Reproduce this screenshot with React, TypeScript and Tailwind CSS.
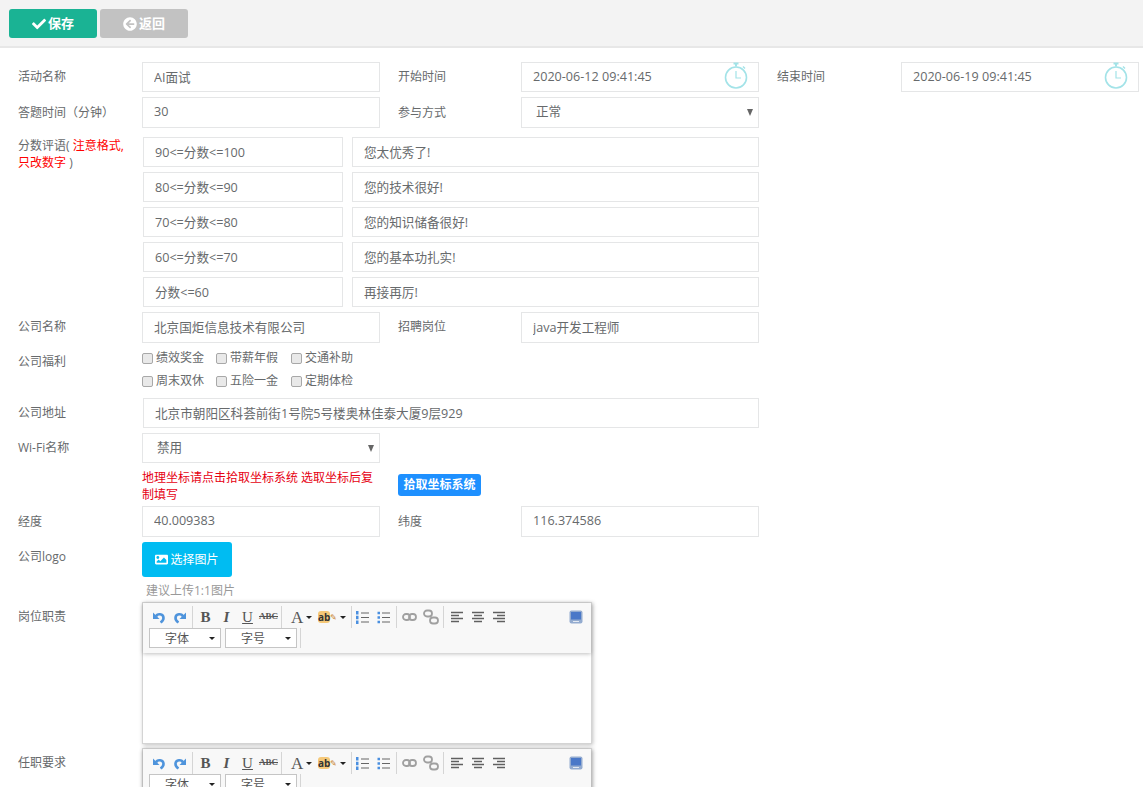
import { FaArrowCircleLeft, FaCheck, FaImage } from 'react-icons/fa'

const fieldClass =
  'h-full w-full border border-[#e5e6e7] bg-white px-[11px] pb-[2px] text-[12.6px] text-[#676a6c] outline-none'

function Label({ children, className = 'pt-[6px]' }: { children: React.ReactNode; className?: string }) {
  return <div className={'w-[142px] shrink-0 pl-[18px] text-[12px] leading-[18px] text-[#676a6c] ' + className}>{children}</div>
}

function Label2({ children, className = 'w-[123px] pt-[6px]' }: { children: React.ReactNode; className?: string }) {
  return <div className={'ml-[18px] shrink-0 text-[12px] leading-[18px] text-[#676a6c] ' + className}>{children}</div>
}

function TextInput({ value, className = 'w-[238px]' }: { value: string; className?: string }) {
  return (
    <div className={className + ' h-full shrink-0'}>
      <input className={fieldClass} defaultValue={value} />
    </div>
  )
}

function ClockIcon() {
  return (
    <svg className="absolute top-0 right-[10px]" width="26" height="29" viewBox="0 0 26 29" fill="none" stroke="#a3e3e8">
      <path d="M10.5 1.5h5M13 1.5v3" strokeWidth="2" />
      <path d="M20 4.5l2 2" strokeWidth="1.5" />
      <circle cx="13" cy="15.5" r="10.5" strokeWidth="1.6" />
      <path d="M13 9v7h5" strokeWidth="1.2" />
    </svg>
  )
}

function DateInput({ value }: { value: string }) {
  return (
    <div className="relative h-full w-[238px] shrink-0">
      <input className={fieldClass} defaultValue={value} />
      <ClockIcon />
    </div>
  )
}

function Select({ value }: { value: string }) {
  return (
    <div className="relative h-full w-[238px] shrink-0">
      <select
        defaultValue={value}
        className="h-full w-full appearance-none border border-[#e5e6e7] bg-white pl-[14px] text-[12.6px] text-[#676a6c] outline-none"
      >
        <option>{value}</option>
      </select>
      <svg className="absolute top-[12px] right-[6px]" width="6" height="7" viewBox="0 0 6 7">
        <path d="M0 0h6L3 7z" fill="#666" />
      </svg>
    </div>
  )
}

function ScoreRow({ range, text }: { range: string; text: string }) {
  return (
    <div className="flex h-[30px] gap-[9px]">
      <TextInput value={range} className="w-[200px]" />
      <TextInput value={text} className="w-[407px]" />
    </div>
  )
}

function Check({ label, className }: { label: string; className: string }) {
  return (
    <div className={'flex items-center gap-[3px] ' + className}>
      <span className="h-[11px] w-[11px] shrink-0 rounded-[2px] border border-[#a8a8a8] bg-[#e9e9e9]" />
      <span>{label}</span>
    </div>
  )
}

function Sep({ className = 'mx-[2px]' }: { className?: string }) {
  return <span className={'h-[22px] w-px shrink-0 bg-[#d5d5d5] ' + className} />
}

function Tool({ children }: { children: React.ReactNode }) {
  return <span className="flex h-[22px] w-[21px] shrink-0 items-center justify-center">{children}</span>
}

function Caret() {
  return (
    <svg width="6" height="3" viewBox="0 0 6 3" className="shrink-0">
      <path d="M0 0h6L3 3z" fill="#222" />
    </svg>
  )
}

function UndoIcon({ flip }: { flip?: boolean }) {
  return (
    <svg width="14" height="14" viewBox="0 0 14 14" fill="none" className={flip ? '-scale-x-100' : ''}>
      <path d="M4 6.5C5 3.5 11.5 3 11.5 8c0 2.4-1.5 3.6-3 4.5" stroke="#4f94dc" strokeWidth="2.6" />
      <path d="M1 2.5v6.5h6.5z" fill="#4f94dc" />
    </svg>
  )
}

function Lines({ kind }: { kind: 'left' | 'center' | 'right' }) {
  const short = kind === 'left' ? 'M1 5.5h8M1 11.5h8' : kind === 'center' ? 'M3 5.5h8M3 11.5h8' : 'M5 5.5h8M5 11.5h8'
  return (
    <svg width="14" height="14" viewBox="0 0 14 14" stroke="#606060" strokeWidth="1.3" fill="none">
      <path d="M1 2.5h12M1 8.5h12" />
      <path d={short} />
    </svg>
  )
}

function ListIcon({ ordered }: { ordered: boolean }) {
  return (
    <svg width="15" height="15" viewBox="0 0 15 15" fill="none">
      <path d="M6 3h8M6 7.5h8M6 12h8" stroke="#666" />
      {ordered ? (
        <path d="M1 1h2.5v3.5H1zM1 5.8h2.5v3.5H1zM1 10.6h2.5v3.5H1z" fill="#4a8fe0" />
      ) : (
        <path d="M1.5 1.8h2.5v2.5H1.5zM1.5 6.3h2.5v2.5H1.5zM1.5 10.8h2.5v2.5H1.5z" fill="#4a8fe0" />
      )}
    </svg>
  )
}

function LinkIcon() {
  return (
    <svg width="15" height="10" viewBox="0 0 15 10" fill="none" stroke="#a0a0a0" strokeWidth="1.8">
      <rect x="1" y="2" width="7" height="6" rx="3" />
      <rect x="7" y="2" width="7" height="6" rx="3" />
    </svg>
  )
}

function UnlinkIcon() {
  return (
    <svg width="16" height="16" viewBox="0 0 16 16" fill="none" stroke="#a0a0a0" strokeWidth="1.8">
      <rect x="1" y="1.5" width="8" height="6" rx="3" />
      <rect x="7" y="8.5" width="8" height="6" rx="3" />
    </svg>
  )
}

function Editor() {
  return (
    <div className="h-[142px] w-[450px] shrink-0 border border-[#d4d4d4] bg-white shadow-[1px_1px_4px_rgba(0,0,0,0.25)]">
      <div className="h-[50px] bg-[#f8f8f8] pt-[3px] pl-[5px] shadow-[0_1px_4px_rgba(0,0,0,0.25)]">
        <div className="flex h-[22px] items-center text-[#555]">
          <Tool><UndoIcon /></Tool>
          <Tool><UndoIcon flip /></Tool>
          <Sep />
          <Tool><span className="font-['Liberation_Serif',serif] text-[15px] font-bold">B</span></Tool>
          <Tool><span className="font-['Liberation_Serif',serif] text-[15px] font-bold italic">I</span></Tool>
          <Tool><span className="font-['Liberation_Serif',serif] text-[15px] underline">U</span></Tool>
          <Tool><span className="font-['Liberation_Serif',serif] text-[9px] font-bold line-through">ABC</span></Tool>
          <Sep />
          <span className="flex w-[29px] shrink-0 items-center gap-[3px] pl-[7px]">
            <span className="font-['Liberation_Serif',serif] text-[17px] leading-none">A</span>
            <Caret />
          </span>
          <span className="flex w-[36px] shrink-0 items-center gap-[3px] pl-[5px]">
            <span className="rounded-[3px] bg-[#f5c878] text-[10px] leading-[12px] font-bold text-[#333]">ab</span>
            <span className="-ml-[3px] text-[8px] leading-none text-[#c9822b]">✎</span>
            <Caret />
          </span>
          <Sep className="ml-[2px]" />
          <Tool><ListIcon ordered /></Tool>
          <Tool><ListIcon ordered={false} /></Tool>
          <Sep />
          <Tool><LinkIcon /></Tool>
          <Tool><UnlinkIcon /></Tool>
          <Sep />
          <Tool><Lines kind="left" /></Tool>
          <Tool><Lines kind="center" /></Tool>
          <Tool><Lines kind="right" /></Tool>
          <span className="ml-auto mr-[8px] flex">
            <svg width="14" height="14" viewBox="0 0 14 14">
              <rect x="0.5" y="0.5" width="13" height="13" rx="2" fill="#93abcf" />
              <rect x="2" y="2" width="10" height="7.5" fill="#4a78c8" />
              <rect x="4" y="11" width="6" height="1" fill="#e3e9f2" />
            </svg>
          </span>
        </div>
        <div className="flex items-center gap-[4px] pl-[1px] text-[12px] text-[#555]">
          <span className="flex h-[20px] w-[72px] items-center justify-between border border-[#c5c5c5] bg-white pt-px pr-[5px] pl-[15px]">字体<Caret /></span>
          <span className="flex h-[20px] w-[72px] items-center justify-between border border-[#c5c5c5] bg-white pt-px pr-[5px] pl-[15px]">字号<Caret /></span>
          <span className="-ml-[1px] h-[20px] w-px bg-[#d5d5d5]" />
        </div>
      </div>
    </div>
  )
}

export default function App() {
  return (
    <div className="h-[787px] overflow-hidden bg-white font-['Open_Sans','Noto_Sans_CJK_SC',sans-serif] text-[#676a6c]">
      <div className="flex h-[48px] gap-[3px] border-b-2 border-[#e7e7e7] bg-[#f3f3f3] pt-[9px] pl-[9px]">
        <button className="flex h-[29px] w-[88px] items-center justify-center gap-[2px] rounded-[3px] bg-[#1ab394] text-[13px] font-bold text-white">
          <FaCheck size={14} />保存
        </button>
        <button className="flex h-[29px] w-[88px] items-center justify-center gap-[2px] rounded-[3px] bg-[#c2c2c2] text-[13px] font-bold text-white">
          <FaArrowCircleLeft size={14} />返回
        </button>
      </div>

      <div className="mt-[14px] flex h-[30px]">
        <Label>活动名称</Label>
        <TextInput value="AI面试" />
        <Label2>开始时间</Label2>
        <DateInput value="2020-06-12 09:41:45" />
        <Label2 className="w-[124px] pt-[6px]">结束时间</Label2>
        <DateInput value="2020-06-19 09:41:45" />
      </div>
      <div className="mt-[5px] flex h-[31px]">
        <Label className="pt-[7px]">答题时间（分钟）</Label>
        <TextInput value="30" />
        <Label2 className="w-[123px] pt-[7px]">参与方式</Label2>
        <Select value="正常" />
      </div>

      <div className="mt-[9px] flex">
        <div className="w-[143px] shrink-0 pl-[18px] whitespace-nowrap text-[12px] leading-[17px]">
          分数评语( <span className="text-[#f00]">注意格式,</span>
          <br />
          <span className="text-[#f00]">只改数字</span> )
        </div>
        <div className="flex flex-col gap-[5px]">
          <ScoreRow range="90<=分数<=100" text="您太优秀了!" />
          <ScoreRow range="80<=分数<=90" text="您的技术很好!" />
          <ScoreRow range="70<=分数<=80" text="您的知识储备很好!" />
          <ScoreRow range="60<=分数<=70" text="您的基本功扎实!" />
          <ScoreRow range="分数<=60" text="再接再厉!" />
        </div>
      </div>

      <div className="mt-[5px] flex h-[31px]">
        <Label>公司名称</Label>
        <TextInput value="北京国炬信息技术有限公司" />
        <Label2>招聘岗位</Label2>
        <TextInput value="java开发工程师" />
      </div>

      <div className="mt-[3px] flex h-[50px]">
        <Label className="pt-[7px]">公司福利</Label>
        <div className="flex flex-col gap-[5px] pt-[3px] text-[12px] leading-[18px]">
          <div className="flex">
            <Check label="绩效奖金" className="w-[74px]" />
            <Check label="带薪年假" className="w-[75px]" />
            <Check label="交通补助" className="w-[75px]" />
          </div>
          <div className="flex">
            <Check label="周末双休" className="w-[74px]" />
            <Check label="五险一金" className="w-[75px]" />
            <Check label="定期体检" className="w-[75px]" />
          </div>
        </div>
      </div>

      <div className="mt-[2px] flex h-[30px]">
        <div className="w-[143px] shrink-0 pt-[6px] pl-[18px] text-[12px] leading-[18px]">公司地址</div>
        <TextInput value="北京市朝阳区科荟前街1号院5号楼奥林佳泰大厦9层929" className="w-[616px]" />
      </div>

      <div className="mt-[5px] flex h-[30px]">
        <Label>Wi-Fi名称</Label>
        <Select value="禁用" />
      </div>

      <div className="mt-[6px] flex h-[31px]">
        <div className="w-[142px] shrink-0" />
        <div className="w-[238px] shrink-0 text-[12px] leading-[17px] text-[#e60012]">
          地理坐标请点击拾取坐标系统 选取坐标后复制填写
        </div>
        <div className="ml-[18px] pt-[5px]">
          <span className="flex h-[22px] w-[83px] items-center justify-center rounded-[3px] bg-[#1e90ff] text-[12px] font-bold text-white">
            拾取坐标系统
          </span>
        </div>
      </div>

      <div className="mt-[6px] flex h-[31px]">
        <Label className="pt-[7px]">经度</Label>
        <TextInput value="40.009383" />
        <Label2 className="w-[123px] pt-[7px]">纬度</Label2>
        <TextInput value="116.374586" />
      </div>

      <div className="mt-[5px] flex">
        <Label>公司logo</Label>
        <div>
          <button className="flex h-[35px] w-[90px] items-center justify-center gap-[2px] rounded-[3px] bg-[#00bcf2] text-[12px] text-white">
            <FaImage size={13} />选择图片
          </button>
          <div className="mt-[5px] pl-[4px] text-[12px] leading-[18px] text-[#999]">建议上传1:1图片</div>
        </div>
      </div>

      <div className="mt-[2px] flex h-[142px]">
        <Label>岗位职责</Label>
        <Editor />
      </div>

      <div className="mt-[4px] flex">
        <Label>任职要求</Label>
        <Editor />
      </div>
    </div>
  )
}
